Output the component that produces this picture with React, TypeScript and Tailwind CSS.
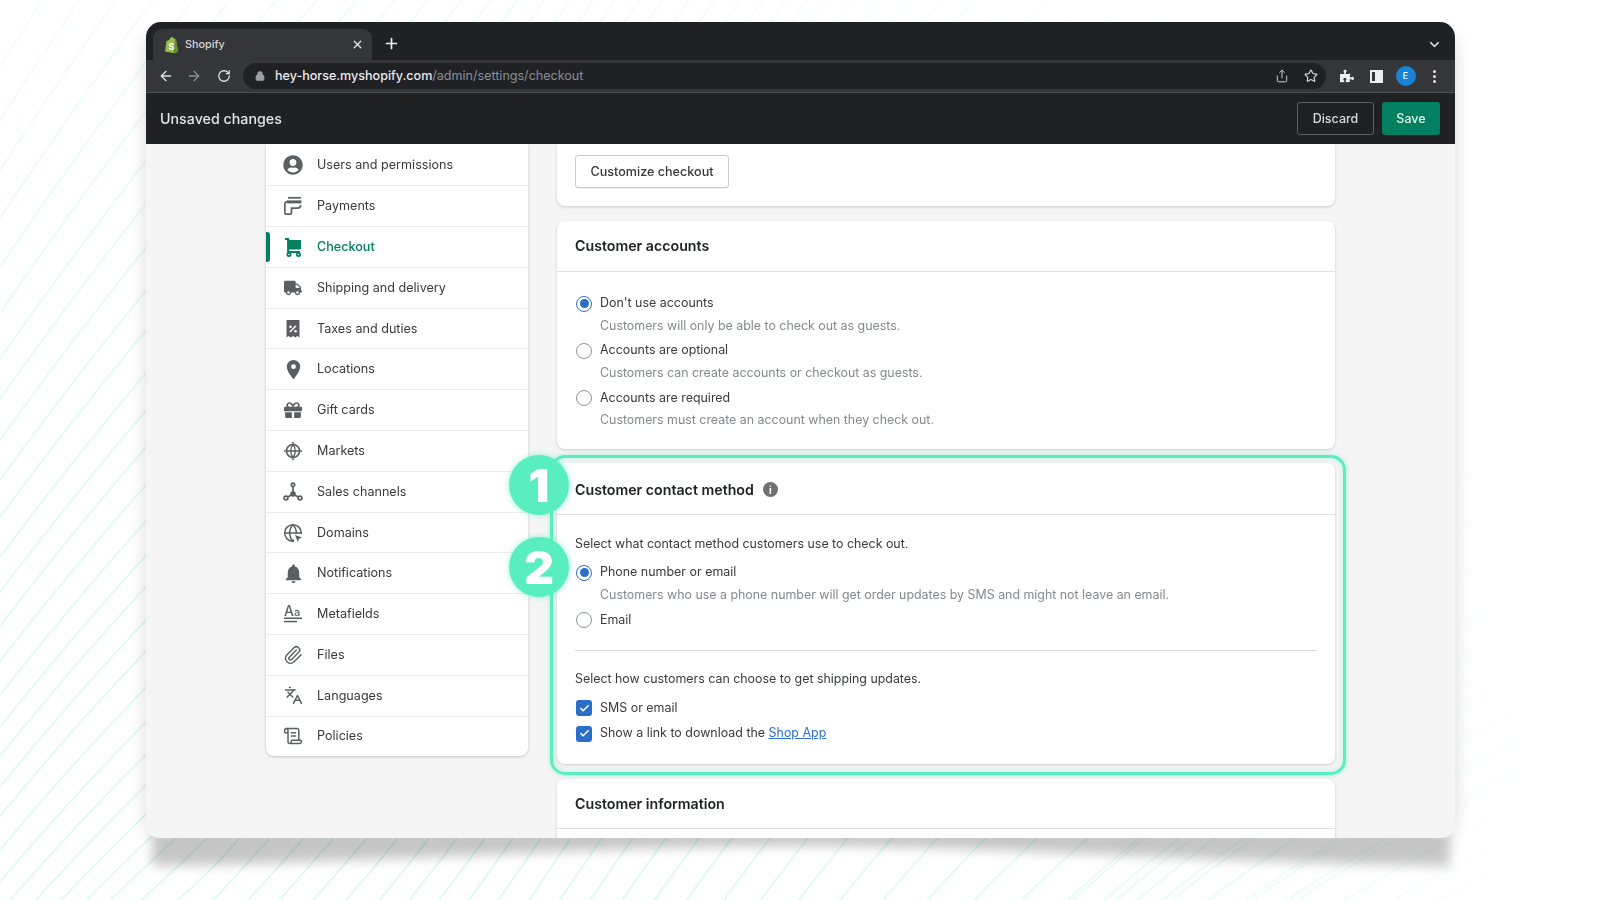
import React from "react";
import {
  ArrowLeft, ArrowRight, RotateCw, Lock, Share, Star, X, Plus, ChevronDown, Check,
  Paperclip, Languages, ScrollText, Globe,
} from "lucide-react";
import { FaUserCircle, FaTruck, FaGift, FaPuzzlePiece } from "react-icons/fa";
import { MdLocationOn, MdNotifications } from "react-icons/md";

const FONT = { fontFamily: "Inter, 'Noto Sans', sans-serif" };

const slopeTable: [number, number][] = [
  [0, 1.3], [150, 1.05], [350, 1.15], [550, 1.5], [800, 1.3], [1000, 1.0], [1300, 0.65], [1600, 0.42],
];
function slope(x: number, y: number) {
  let s = slopeTable[slopeTable.length - 1][1];
  if (x <= 0) s = slopeTable[0][1];
  else
    for (let i = 0; i < slopeTable.length - 1; i++) {
      const [a, sa] = slopeTable[i];
      const [b, sb] = slopeTable[i + 1];
      if (x >= a && x <= b) {
        s = sa + ((x - a) / (b - a)) * (sb - sa);
        break;
      }
    }
  if (x < 220) s += ((620 - y) / 620) * 0.3;
  return s;
}
function trace(x0: number, y0: number) {
  const fwd: string[] = [];
  let x = x0, y = y0;
  while (y > -10 && x < 1610) {
    fwd.push(`${x.toFixed(1)} ${y.toFixed(1)}`);
    y -= slope(x, y) * 8;
    x += 8;
  }
  const back: string[] = [];
  x = x0; y = y0;
  while (y < 910 && x > -10) {
    y += slope(x, y) * 8;
    x -= 8;
    back.unshift(`${x.toFixed(1)} ${y.toFixed(1)}`);
  }
  return "M" + [...back, ...fwd].join("L");
}
const leftSeeds = [66, 120, 170, 218, 267, 313, 359, 399, 440, 480, 517, 557, 592, 626, 661, 695, 727, 756, 787, 816];
const bottomSeeds = [10, 38, 66, 94, 122, 150, 176, 207, 240, 270, 304, 334, 367, 398, 429, 457, 485, 513, 541, 571, 602, 633, 666, 699, 732, 770, 808, 848, 892, 938, 986, 1037, 1088, 1139, 1193, 1244, 1297, 1348, 1399, 1453, 1510, 1565];
const rightSeeds = [800, 772, 744, 716, 688, 660, 632];
const stripes = [
  ...leftSeeds.map((y) => trace(0, y)),
  ...bottomSeeds.map((x) => trace(x, 838)),
  ...rightSeeds.map((y) => trace(1456, y)),
];

function Backdrop() {
  return (
    <svg className="absolute inset-0" width="1600" height="900" viewBox="0 0 1600 900" fill="none">
      <defs>
        <radialGradient id="st" gradientUnits="userSpaceOnUse" cx="420" cy="880" r="1150">
          <stop offset="0" stopColor="#def9f0" />
          <stop offset="0.5" stopColor="#e3fbf3" />
          <stop offset="0.76" stopColor="#f1fdf9" />
          <stop offset="1" stopColor="#ffffff" />
        </radialGradient>
        <filter id="bl" x="-5%" y="-100%" width="110%" height="300%">
          <feGaussianBlur stdDeviation="6" />
        </filter>
        <filter id="bl2" x="-5%" y="-5%" width="110%" height="110%">
          <feGaussianBlur stdDeviation="9" />
        </filter>
        <filter id="bl3" x="0" y="0" width="1600" height="900" filterUnits="userSpaceOnUse">
          <feGaussianBlur stdDeviation="0.5" />
        </filter>
      </defs>
      <g filter="url(#bl3)">
        {stripes.map((d, i) => (
          <path key={i} d={d} stroke="url(#st)" strokeWidth="2" />
        ))}
      </g>
      <rect x="146" y="40" width="1309" height="790" fill="#000" opacity="0.14" filter="url(#bl2)" />
      <path d="M152 832 L152 866 C 400 862 600 846 800 846 C 1000 846 1200 862 1450 866 L1450 832 Z" fill="#000" opacity="0.22" filter="url(#bl)" />
    </svg>
  );
}

const I = ({ children }: { children: React.ReactNode }) => (
  <svg width="20" height="20" viewBox="0 0 20 20" fill="#5c5f62">{children}</svg>
);

const PaymentsIcon = () => (
  <svg width="20" height="20" viewBox="0 0 20 20" fill="none" stroke="#5c5f62" strokeWidth="1.700">
    <path d="M5 1.800h13" />
    <path d="M4 4.400h14.500v3H4z" fill="#5c5f62" stroke="none" />
    <path d="M1.800 17V8.500c0-1.800 1-2.800 2.700-2.800M1.800 17c0 .8.400 1.200 1.200 1.200h4.200c.8 0 1.300-.4 1.300-1.200v-4.800h6c2 0 3-1 3.300-3" />
  </svg>
);
const CartIcon = () => (
  <svg width="20" height="20" viewBox="0 0 20 20" fill="#008060">
    <path d="M2 1h3.200c.6 0 1 .4 1.100.9L6.500 3H18v8.500c0 .5-.4.9-.9.9H6.200v1.600H17v2H5.100c-.6 0-1-.4-1-1V3H2z" />
    <path fillRule="evenodd" d="M6 15a2.500 2.500 0 1 1 0 5 2.500 2.500 0 0 1 0-5zm0 1.700a.8.8 0 1 0 0 1.600.8.8 0 0 0 0-1.600zM15.500 15a2.500 2.500 0 1 1 0 5 2.500 2.500 0 0 1 0-5zm0 1.700a.8.8 0 1 0 0 1.600.8.8 0 0 0 0-1.600z" />
  </svg>
);
const TaxIcon = () => (
  <I>
    <path d="M3.500 1h13v17.500l-2.200-1.500-2.100 1.500-2.200-1.500-2.200 1.500-2.100-1.500-2.200 1.500z" />
    <path d="M12.600 6.300l1 1-6.300 6.300-1-1z" fill="#fff" />
    <circle cx="7.500" cy="7.800" r="1.300" fill="#fff" />
    <circle cx="12.500" cy="12.300" r="1.300" fill="#fff" />
  </I>
);
const MarketsIcon = () => (
  <svg width="20" height="20" viewBox="0 0 20 20" fill="none" stroke="#5c5f62" strokeWidth="1.600">
    <circle cx="10" cy="10" r="6.500" />
    <path d="M3.500 10h13M10 3.500c-3 3.500-3 9.500 0 13M10 3.500c3 3.500 3 9.500 0 13" strokeWidth="1.300" />
    <path d="M10 .6l1.800 2H8.200zM10 19.400l1.800-2H8.200zM.6 10l2-1.800v3.600zM19.400 10l-2-1.800v3.600z" fill="#5c5f62" stroke="none" />
  </svg>
);
const ChannelsIcon = () => (
  <svg width="20" height="20" viewBox="0 0 20 20" fill="none" stroke="#5c5f62" strokeWidth="1.700">
    <circle cx="10" cy="2.800" r="1.700" />
    <circle cx="3" cy="16" r="1.900" />
    <circle cx="17" cy="16" r="1.900" />
    <path d="M10 4.500v7M5 15l4-2.500M15 15l-4-2.500" />
    <circle cx="10" cy="12" r="2.800" fill="#5c5f62" stroke="none" />
  </svg>
);
const DomainsIcon = () => (
  <span className="relative block w-5 h-5">
    <Globe size={20} strokeWidth={1.8} color="#5c5f62" />
    <svg className="absolute left-[11px] top-[11px]" width="9" height="9" viewBox="0 0 9 9">
      <path d="M0 0h9v9H0z" fill="#fff" />
      <path d="M1 1l7 2.500-3 1.200L3.800 8z" fill="#5c5f62" />
    </svg>
  </span>
);
const MetaIcon = () => (
  <svg width="20" height="20" viewBox="0 0 20 20" fill="#5c5f62" className="overflow-visible">
    <text x="1" y="11.500" fontSize="14" fontFamily="Inter, sans-serif" fontWeight="500">A</text>
    <text x="11" y="11.500" fontSize="11" fontFamily="Inter, sans-serif" fontWeight="500">a</text>
    <rect x="1" y="13.500" width="18" height="1.500" />
    <rect x="1" y="16.800" width="13" height="1.500" />
  </svg>
);

const navItems: { label: string; icon: React.ReactNode; active?: boolean }[] = [
  { label: "Users and permissions", icon: <FaUserCircle size={20} color="#5c5f62" /> },
  { label: "Payments", icon: <PaymentsIcon /> },
  { label: "Checkout", icon: <CartIcon />, active: true },
  { label: "Shipping and delivery", icon: <FaTruck size={18} color="#5c5f62" /> },
  { label: "Taxes and duties", icon: <TaxIcon /> },
  { label: "Locations", icon: <MdLocationOn size={23} color="#5c5f62" className="-mx-[2px]" /> },
  { label: "Gift cards", icon: <FaGift size={18} color="#5c5f62" /> },
  { label: "Markets", icon: <MarketsIcon /> },
  { label: "Sales channels", icon: <ChannelsIcon /> },
  { label: "Domains", icon: <DomainsIcon /> },
  { label: "Notifications", icon: <MdNotifications size={23} color="#5c5f62" className="-mx-[2px]" /> },
  { label: "Metafields", icon: <MetaIcon /> },
  { label: "Files", icon: <Paperclip size={20} strokeWidth={1.7} color="#5c5f62" /> },
  { label: "Languages", icon: <Languages size={19} strokeWidth={1.9} color="#5c5f62" /> },
  { label: "Policies", icon: <ScrollText size={20} strokeWidth={1.8} color="#5c5f62" /> },
];

function Sidebar() {
  return (
    <div className="w-[262px] pt-[1.500px] self-start bg-white rounded-b-lg shadow-[0_1px_3px_rgba(0,0,0,0.2)] shrink-0">
      {navItems.map((n, i) => (
        <div key={n.label} className={`relative flex items-center pl-[17px] gap-[14px] ${i < navItems.length - 1 ? "h-[40.800px] border-b border-[#ececec]" : "h-[39.500px]"}`}>
          {n.active && <span className="absolute left-0 top-[5px] w-[3.500px] h-[30px] bg-[#008060] rounded-r-[3px]" />}
          <span className="w-5 h-5 flex items-center justify-center shrink-0">{n.icon}</span>
          <span className={`pt-px text-[12.600px] ${n.active ? "text-[#008060] font-medium" : "text-[#37393b]"}`}>{n.label}</span>
        </div>
      ))}
    </div>
  );
}

function Radio({ checked }: { checked?: boolean }) {
  return (
    <span className={`ml-px w-4 h-4 rounded-full border-[1.500px] bg-white flex items-center justify-center shrink-0 ${checked ? "border-[#2c6ecb]" : "border-[#8c9196]"}`}>
      {checked && <span className="w-[9px] h-[9px] rounded-full bg-[#2c6ecb]" />}
    </span>
  );
}
function RadioOption({ label, desc, checked }: { label: string; desc?: string; checked?: boolean }) {
  return (
    <div>
      <div className="flex items-center gap-2 h-[22px] text-[12.450px] text-[#37393b]">
        <Radio checked={checked} />
        <span>{label}</span>
      </div>
      {desc && <div className="pl-[25px] h-[22px] leading-[22px] text-[12.400px] text-[#85888c]">{desc}</div>}
    </div>
  );
}
function CheckRow({ children }: { children: React.ReactNode }) {
  return (
    <div className="flex items-center gap-2 h-[22px] text-[12.450px] text-[#37393b]">
      <span className="ml-px w-4 h-4 rounded-[3px] bg-[#2c6ecb] flex items-center justify-center shrink-0">
        <Check size={11} strokeWidth={3.500} color="#fff" />
      </span>
      <span>{children}</span>
    </div>
  );
}
const Card = ({ className = "", children }: { className?: string; children: React.ReactNode }) => (
  <div className={`bg-white rounded-lg shrink-0 shadow-[0_1px_3px_rgba(0,0,0,0.18)] ${className}`}>{children}</div>
);
const Title = ({ children }: { children: React.ReactNode }) => (
  <span className="text-[14.200px] font-semibold text-[#202223]">{children}</span>
);
function Badge({ n, className }: { n: string; className: string }) {
  return (
    <span className={`absolute w-[60px] h-[60px] rounded-full bg-[#58eebf] shadow-[0_0_6px_rgba(88,238,191,0.6)] flex items-center justify-center text-white text-[46px] leading-none font-black ${className}`}>
      {n}
    </span>
  );
}

function Main() {
  return (
    <div className="w-[778px] flex flex-col shrink-0">
      <Card className="h-[62px] rounded-t-none pl-[18px] pt-[11px]">
        <span className="inline-flex items-center justify-center w-[154px] h-[33px] pt-px bg-white border border-[#c9cccf] rounded-[3px] shadow-[0_1px_0_rgba(0,0,0,0.06)] text-[12.600px] font-medium text-[#37393b]">
          Customize checkout
        </span>
      </Card>
      <Card className="mt-[15px] h-[228px]">
        <div className="h-[51px] px-[18px] flex items-center border-b border-[#dfe1e3]"><Title>Customer accounts</Title></div>
        <div className="px-[18px] pt-[20.500px] flex flex-col gap-[3.300px]">
          <RadioOption checked label="Don't use accounts" desc="Customers will only be able to check out as guests." />
          <RadioOption label="Accounts are optional" desc="Customers can create accounts or checkout as guests." />
          <RadioOption label="Accounts are required" desc="Customers must create an account when they check out." />
        </div>
      </Card>
      <Card className="relative mt-[14px] h-[301px]">
        <span className="absolute -left-[7px] -right-[11px] -top-2 -bottom-[11px] rounded-[15px] border-[3.500px] border-[#58eebf] shadow-[0_0_5px_rgba(88,238,191,0.5),inset_0_0_6px_rgba(88,238,191,0.35)] pointer-events-none" />
        <div className="h-[52px] pt-[2px] px-[18px] flex items-center gap-[9px] border-b border-[#dfe1e3]">
          <Title>Customer contact method</Title>
          <span className="w-[15px] h-[15px] rounded-full bg-[#6d7175] flex items-center justify-center text-white text-[10px] font-bold leading-none">i</span>
        </div>
        <div className="px-[18px] pt-[18.500px]">
          <div className="h-5 leading-5 text-[12.400px] text-[#37393b]">Select what contact method customers use to check out.</div>
          <div className="mt-2 flex flex-col gap-[3.500px]">
            <RadioOption checked label="Phone number or email" desc="Customers who use a phone number will get order updates by SMS and might not leave an email." />
            <RadioOption label="Email" />
          </div>
          <div className="mt-[19px] border-t border-[#d5d7d9]" />
          <div className="mt-[17.500px] h-5 leading-5 text-[12.400px] text-[#37393b]">Select how customers can choose to get shipping updates.</div>
          <div className="mt-[8.500px] flex flex-col gap-[3.500px]">
            <CheckRow>SMS or email</CheckRow>
            <CheckRow>
              Show a link to download the <span className="text-[#2c6ecb] underline">Shop App</span>
            </CheckRow>
          </div>
        </div>
        <Badge n="1" className="-left-[48px] -top-2" />
        <Badge n="2" className="-left-[48px] top-[74px]" />
      </Card>
      <Card className="mt-[15px] h-[120px]">
        <div className="h-[50px] px-[18px] flex items-center border-b border-[#dfe1e3]"><Title>Customer information</Title></div>
      </Card>
    </div>
  );
}

function Chrome() {
  return (
    <>
      <div className="h-[38px] bg-[#202124] flex items-end pl-[7px] pr-[13px] shrink-0">
        <div className="w-[219px] h-[31px] bg-[#35363a] rounded-t-[9px] flex items-center pl-[11px] pr-[8px]">
          <svg width="15" height="16" viewBox="0 0 15 16">
            <path d="M2.500 4C3.500 3.600 5 3 5.500 2.500 6 1 7 0 8 0c1 0 1.500.7 2 1.500l1 .2 1 .8L14 15l-5 1-8-1.500z" fill="#95bf47" />
            <path d="M11 1.700l1 .8L14 15l-4.500 1z" fill="#5e8e3e" />
            <text x="4.500" y="12.500" fontSize="9" fontWeight="700" fill="#fff" fontFamily="Inter, sans-serif">S</text>
          </svg>
          <span className="ml-[6px] pt-px text-[10.800px] font-medium text-[#d4d5d7]">Shopify</span>
          <X size={13} strokeWidth={2.400} color="#e8eaed" className="ml-auto" />
        </div>
        <Plus size={17} strokeWidth={2.400} color="#eceef0" className="ml-[11px] mb-[8px]" />
        <ChevronDown size={15} strokeWidth={2.400} color="#d5d7da" className="ml-auto mb-[8px]" />
      </div>
      <div className="h-[33px] bg-[#35363a] border-b border-[#4d4e51] flex items-center pl-[12px] shrink-0">
        <ArrowLeft size={16} strokeWidth={2} color="#dfe1e5" />
        <ArrowRight size={16} strokeWidth={2} color="#8b8d90" className="ml-[12px]" />
        <RotateCw size={14} strokeWidth={2.200} color="#dfe1e5" className="ml-[15px]" />
        <div className="ml-[12px] w-[1083px] h-[26px] bg-[#202124] rounded-full flex items-center pl-[12px] pr-[8px]">
          <Lock size={10} strokeWidth={3} color="#9aa0a6" fill="#9aa0a6" />
          <span className="ml-[10px] text-[12.550px] text-[#e8eaed] font-medium">hey-horse.myshopify.com<span className="text-[#8b8f94] font-normal">/admin/settings/checkout</span></span>
          <Share size={14} strokeWidth={1.700} color="#c9ccd0" className="ml-auto" />
          <Star size={14} strokeWidth={2} color="#d5d7da" className="ml-[15px]" />
        </div>
        <FaPuzzlePiece size={14} color="#eceef0" className="ml-[14px]" />
        <span className="ml-[15.500px] w-[13px] h-[13px] border-[2px] border-[#eceef0] flex justify-end"><span className="w-[6px] h-full bg-[#eceef0]" /></span>
        <span className="ml-[13px] w-5 h-5 rounded-full bg-[#1a83d6] flex items-center justify-center text-[9px] font-medium text-white">E</span>
        <span className="ml-[17px] flex flex-col gap-[2px]">
          <span className="w-[3px] h-[3px] rounded-full bg-[#e8eaed]" />
          <span className="w-[3px] h-[3px] rounded-full bg-[#e8eaed]" />
          <span className="w-[3px] h-[3px] rounded-full bg-[#e8eaed]" />
        </span>
      </div>
      <div className="h-[51px] bg-[#202123] flex items-center pl-[14px] pr-[15px] shrink-0">
        <span className="text-[14.250px] font-medium text-[#e3e4e5]">Unsaved changes</span>
        <span className="ml-auto w-[77px] h-[33px] pt-px border border-[#5c5f62] rounded-[3px] flex items-center justify-center text-[12.500px] font-medium text-[#d9dadb]">Discard</span>
        <span className="ml-2 w-[58px] h-[33px] pt-px bg-[#008060] rounded-[3px] flex items-center justify-center text-[12.500px] font-medium text-[#e6f2ee]">Save</span>
      </div>
    </>
  );
}

export default function App() {
  return (
    <div style={FONT} className="relative w-[1600px] h-[900px] bg-white overflow-hidden pl-[146px] pt-[22px]">
      <Backdrop />
      <div className="relative w-[1309px] h-[816px] bg-[#f5f5f5] rounded-t-[15px] rounded-b-[14px] overflow-hidden flex flex-col blur-[0.4px]">
        <Chrome />
        <div className="flex-1 min-h-0 flex pl-[120px] gap-[29px]">
          <Sidebar />
          <Main />
        </div>
      </div>
    </div>
  );
}
